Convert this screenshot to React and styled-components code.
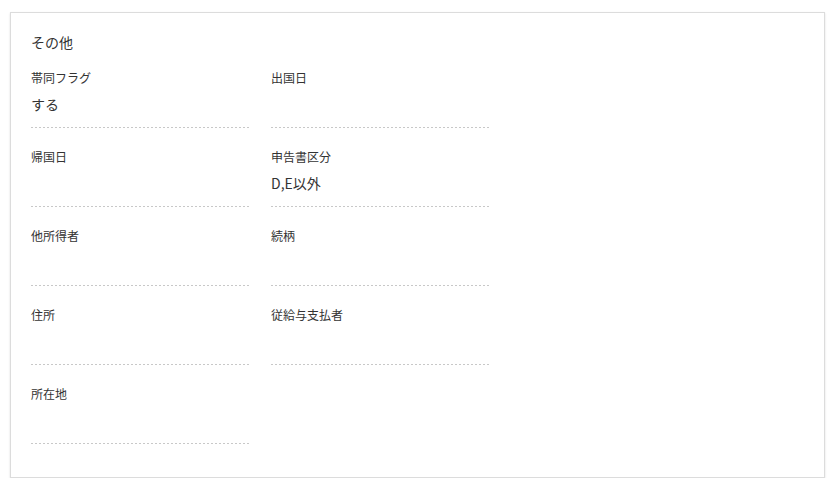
import styled, { createGlobalStyle } from "styled-components";

const GlobalStyle = createGlobalStyle`
  body {
    margin: 0;
    background: #fff;
    font-family: "Noto Sans CJK JP", "Noto Sans", sans-serif;
    color: #333;
  }
`;

const Page = styled.div`
  padding: 12px 0 0 10px;
`;

const Card = styled.section`
  box-sizing: border-box;
  width: 815px;
  height: 466px;
  border: 1px solid #dcdcdc;
  box-shadow: 0 1px 2px rgba(0, 0, 0, 0.12);
  background: #fff;
  padding: 19px 20px 0;
`;

const Title = styled.h2`
  margin: 0 0 17px;
  font-size: 14px;
  font-weight: normal;
  line-height: 20px;
  color: #333;
`;

const Grid = styled.div`
  display: grid;
  grid-template-columns: 219px 219px;
  column-gap: 21px;
  row-gap: 20px;
`;

/* 2px dash / 2px gap line under each field */
const Field = styled.div`
  padding-bottom: 14px;
  background-image: repeating-linear-gradient(
    to right,
    #c8c8c8 0 2px,
    transparent 2px 4px
  );
  background-size: 100% 1px;
  background-repeat: no-repeat;
  background-position: left bottom;
`;

const Label = styled.div`
  font-size: 12px;
  line-height: 18px;
  margin-bottom: 7px;
  color: #333;
`;

const Value = styled.div`
  font-size: 14px;
  line-height: 20px;
  min-height: 20px;
  color: #333;
`;

const FIELDS = [
  { id: 1, label: "帯同フラグ", value: "する" },
  { id: 2, label: "出国日", value: "" },
  { id: 3, label: "帰国日", value: "" },
  { id: 4, label: "申告書区分", value: "D,E以外" },
  { id: 5, label: "他所得者", value: "" },
  { id: 6, label: "続柄", value: "" },
  { id: 7, label: "住所", value: "" },
  { id: 8, label: "従給与支払者", value: "" },
  { id: 9, label: "所在地", value: "" },
];

export default function App() {
  return (
    <Page>
      <GlobalStyle />
      <Card>
        <Title>その他</Title>
        <Grid>
          {FIELDS.map((f) => (
            <Field key={f.id}>
              <Label>{f.label}</Label>
              <Value>{f.value}</Value>
            </Field>
          ))}
        </Grid>
      </Card>
    </Page>
  );
}
